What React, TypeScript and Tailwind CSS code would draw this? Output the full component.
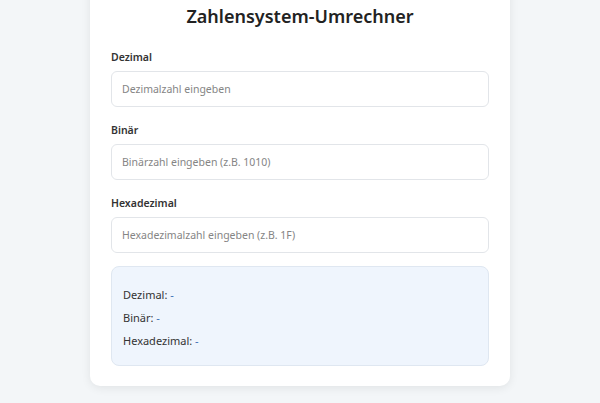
import React, { useState } from 'react';

const font = { fontFamily: '"Segoe UI", "Noto Sans", "Open Sans", sans-serif' };

interface FieldProps {
  label: string;
  placeholder: string;
  value: string;
  onChange: (v: string) => void;
}

const Field: React.FC<FieldProps> = ({ label, placeholder, value, onChange }) => (
  <div className="mb-[13px]">
    <label className="block text-[10.5px] leading-[20px] font-semibold text-[#333] mb-[4px]">{label}</label>
    <input
      value={value}
      onChange={(e) => onChange(e.target.value)}
      placeholder={placeholder}
      className="w-full h-[36px] px-[10px] rounded-[6px] border border-[#e2e5e9] bg-white text-[10.5px] text-[#333] placeholder:text-[#858585] outline-none"
    />
  </div>
);

export default function App() {
  const [dec, setDec] = useState('');
  const [bin, setBin] = useState('');
  const [hex, setHex] = useState('');

  return (
    <div className="min-h-[403px] bg-[#f3f6f8] flex justify-center" style={font}>
      <div className="w-[420px] -mt-[20px] mb-[16px] self-start bg-white rounded-[10px] shadow-[0_2px_10px_rgba(0,0,0,0.08)] pt-[21px] pb-[20px] px-[21px]">
        <h1 className="text-center text-[18px] leading-[30px] font-semibold text-[#222] mb-[16px]">
          Zahlensystem-Umrechner
        </h1>
        <Field label="Dezimal" placeholder="Dezimalzahl eingeben" value={dec} onChange={setDec} />
        <Field label="Binär" placeholder="Binärzahl eingeben (z.B. 1010)" value={bin} onChange={setBin} />
        <Field label="Hexadezimal" placeholder="Hexadezimalzahl eingeben (z.B. 1F)" value={hex} onChange={setHex} />
        <div className="mt-[1px] h-[100px] rounded-[8px] border border-[#dfe7f1] bg-[#eff5fd] pl-[11px] pt-[16px] text-[11px] leading-[23px] text-[#333]">
          <div>Dezimal: <span className="text-[#3b6fb5]">-</span></div>
          <div>Binär: <span className="text-[#3b6fb5]">-</span></div>
          <div>Hexadezimal: <span className="text-[#3b6fb5]">-</span></div>
        </div>
      </div>
    </div>
  );
}
